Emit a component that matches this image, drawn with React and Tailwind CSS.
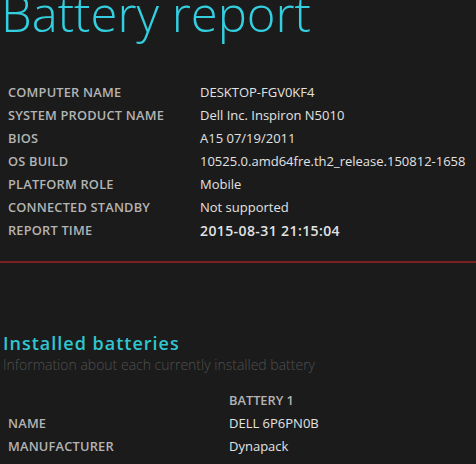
const SYSTEM_INFO = [
  ['Computer name', 'DESKTOP-FGV0KF4'],
  ['System product name', 'Dell Inc. Inspiron N5010'],
  ['BIOS', 'A15 07/19/2011'],
  ['OS build', '10525.0.amd64fre.th2_release.150812-1658'],
  ['Platform role', 'Mobile'],
  ['Connected standby', 'Not supported'],
]

const BATTERY_INFO = [
  ['Name', 'DELL 6P6PN0B'],
  ['Manufacturer', 'Dynapack'],
  ['Serial number', '3479'],
]

function InfoRow({ label, value, labelWidth, valueClass = '' }) {
  return (
    <div className="flex h-[23px] items-center">
      <div
        className={`${labelWidth} shrink-0 text-[12.8px] font-semibold uppercase tracking-[0.2px] text-[#b4b4b4]`}
      >
        {label}
      </div>
      <div className={`whitespace-nowrap text-[#e2e2e2] ${valueClass}`}>{value}</div>
    </div>
  )
}

export default function App() {
  return (
    <div
      className="h-[464px] w-[476px] overflow-hidden bg-[#1b1b1b]"
      style={{ fontFamily: '"Open Sans", "Noto Sans", sans-serif' }}
    >
      <h1 className="-mt-[21px] ml-[1px] whitespace-nowrap text-[49px] font-light leading-[68px] text-[#33cfe0]">
        Battery report
      </h1>

      <div className="mt-[34px] pl-[8px] text-[13px]">
        {SYSTEM_INFO.map(([label, value]) => (
          <InfoRow key={label} label={label} value={value} labelWidth="w-[192px]" />
        ))}
        <InfoRow
          label="Report time"
          value="2015-08-31 21:15:04"
          labelWidth="w-[192px]"
          valueClass="text-[14px] font-semibold tracking-[0.4px]"
        />
      </div>

      <div className="mt-[19px] h-[2px] w-full bg-[#7a1f24]" />

      <div className="mt-[68px] pl-[3px]">
        <h2 className="text-[18px] font-semibold leading-[24px] tracking-[1px] text-[#30c6d0]">
          Installed batteries
        </h2>
        <p className="text-[14px] font-light leading-[20px] text-[#505050]">
          Information about each currently installed battery
        </p>
      </div>

      <div className="mt-[14px] pl-[8px] text-[13px]">
        <div className="flex h-[23px] items-center">
          <div className="w-[221px] shrink-0" />
          <div className="text-[12.8px] font-semibold uppercase text-[#b4b4b4]">Battery 1</div>
        </div>
        {BATTERY_INFO.map(([label, value]) => (
          <InfoRow key={label} label={label} value={value} labelWidth="w-[221px]" />
        ))}
      </div>
    </div>
  )
}
